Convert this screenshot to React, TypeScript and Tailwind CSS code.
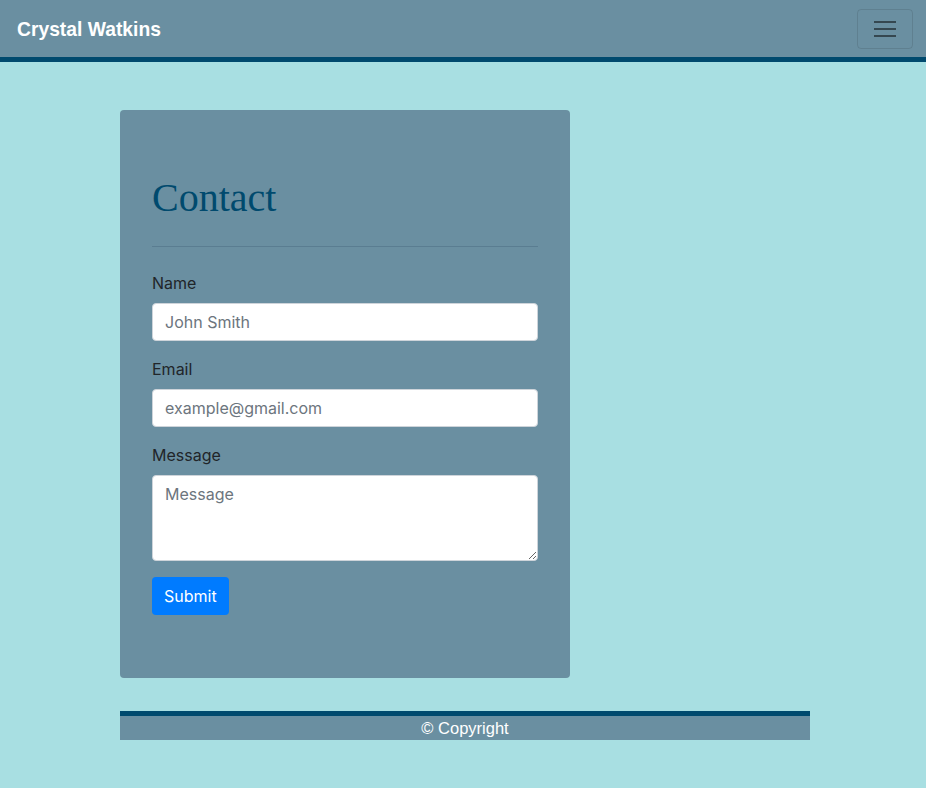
export default function App() {
  return (
    <div className="min-h-[788px] bg-[#a8dfe2] font-['Inter',sans-serif] text-[16px] text-[#212529]">
      {/* Navbar */}
      <nav className="flex h-[62px] items-center justify-between border-b-[5px] border-[#004a6e] bg-[#6a8fa1] pl-[17px] pr-[13px]">
        <span className="pt-[3px] font-['Liberation_Sans',Arial,sans-serif] text-[19.3px] font-bold text-white">Crystal Watkins</span>
        <button className="flex h-[40px] w-[56px] items-center justify-center rounded-[4px] border border-black/10">
          <svg width="30" height="30" viewBox="0 0 30 30">
            <path d="M4 8h22M4 15h22M4 22h22" stroke="rgba(0,0,0,0.5)" strokeWidth="2" strokeLinecap="butt" />
          </svg>
        </button>
      </nav>

      <div className="ml-[120px] w-[690px] pt-[48px] pb-[48px]">
        {/* Card */}
        <div className="w-[450px] rounded-[4px] bg-[#6a8fa1] px-[32px] pt-[64px] pb-[63px]">
          <h1 className="font-['Liberation_Serif','Times_New_Roman',serif] text-[40px] leading-[48px] text-[#004a6e]">Contact</h1>
          <hr className="mt-[24px] mb-[24px] border-t border-[#5a7d91]" />
          <form className="flex flex-col">
            <label className="mb-[8px] leading-[24px]">Name</label>
            <input
              className="mb-[16px] h-[38px] rounded-[4px] border border-[#ced4da] bg-white px-[12px] text-[16px] text-[#495057] outline-none placeholder:text-[#6c757d]"
              placeholder="John Smith"
            />
            <label className="mb-[8px] leading-[24px]">Email</label>
            <input
              className="mb-[16px] h-[38px] rounded-[4px] border border-[#ced4da] bg-white px-[12px] text-[16px] text-[#495057] outline-none placeholder:text-[#6c757d]"
              placeholder="example@gmail.com"
            />
            <label className="mb-[8px] leading-[24px]">Message</label>
            <textarea
              className="mb-[16px] h-[86px] rounded-[4px] border border-[#ced4da] bg-white px-[12px] py-[6px] text-[16px] leading-[24px] text-[#495057] outline-none placeholder:text-[#6c757d]"
              placeholder="Message"
            />
            <div>
              <button type="button" className="h-[38px] rounded-[4px] bg-[#007bff] px-[12px] text-[16px] text-white">
                Submit
              </button>
            </div>
          </form>
        </div>

        {/* Footer */}
        <footer className="mt-[33px] border-t-[5px] border-[#004a6e] bg-[#6a8fa1] pt-[1px] text-center font-['Liberation_Sans',Arial,sans-serif] text-[16.5px] leading-[23px] text-white">
          © Copyright
        </footer>
      </div>
    </div>
  );
}
